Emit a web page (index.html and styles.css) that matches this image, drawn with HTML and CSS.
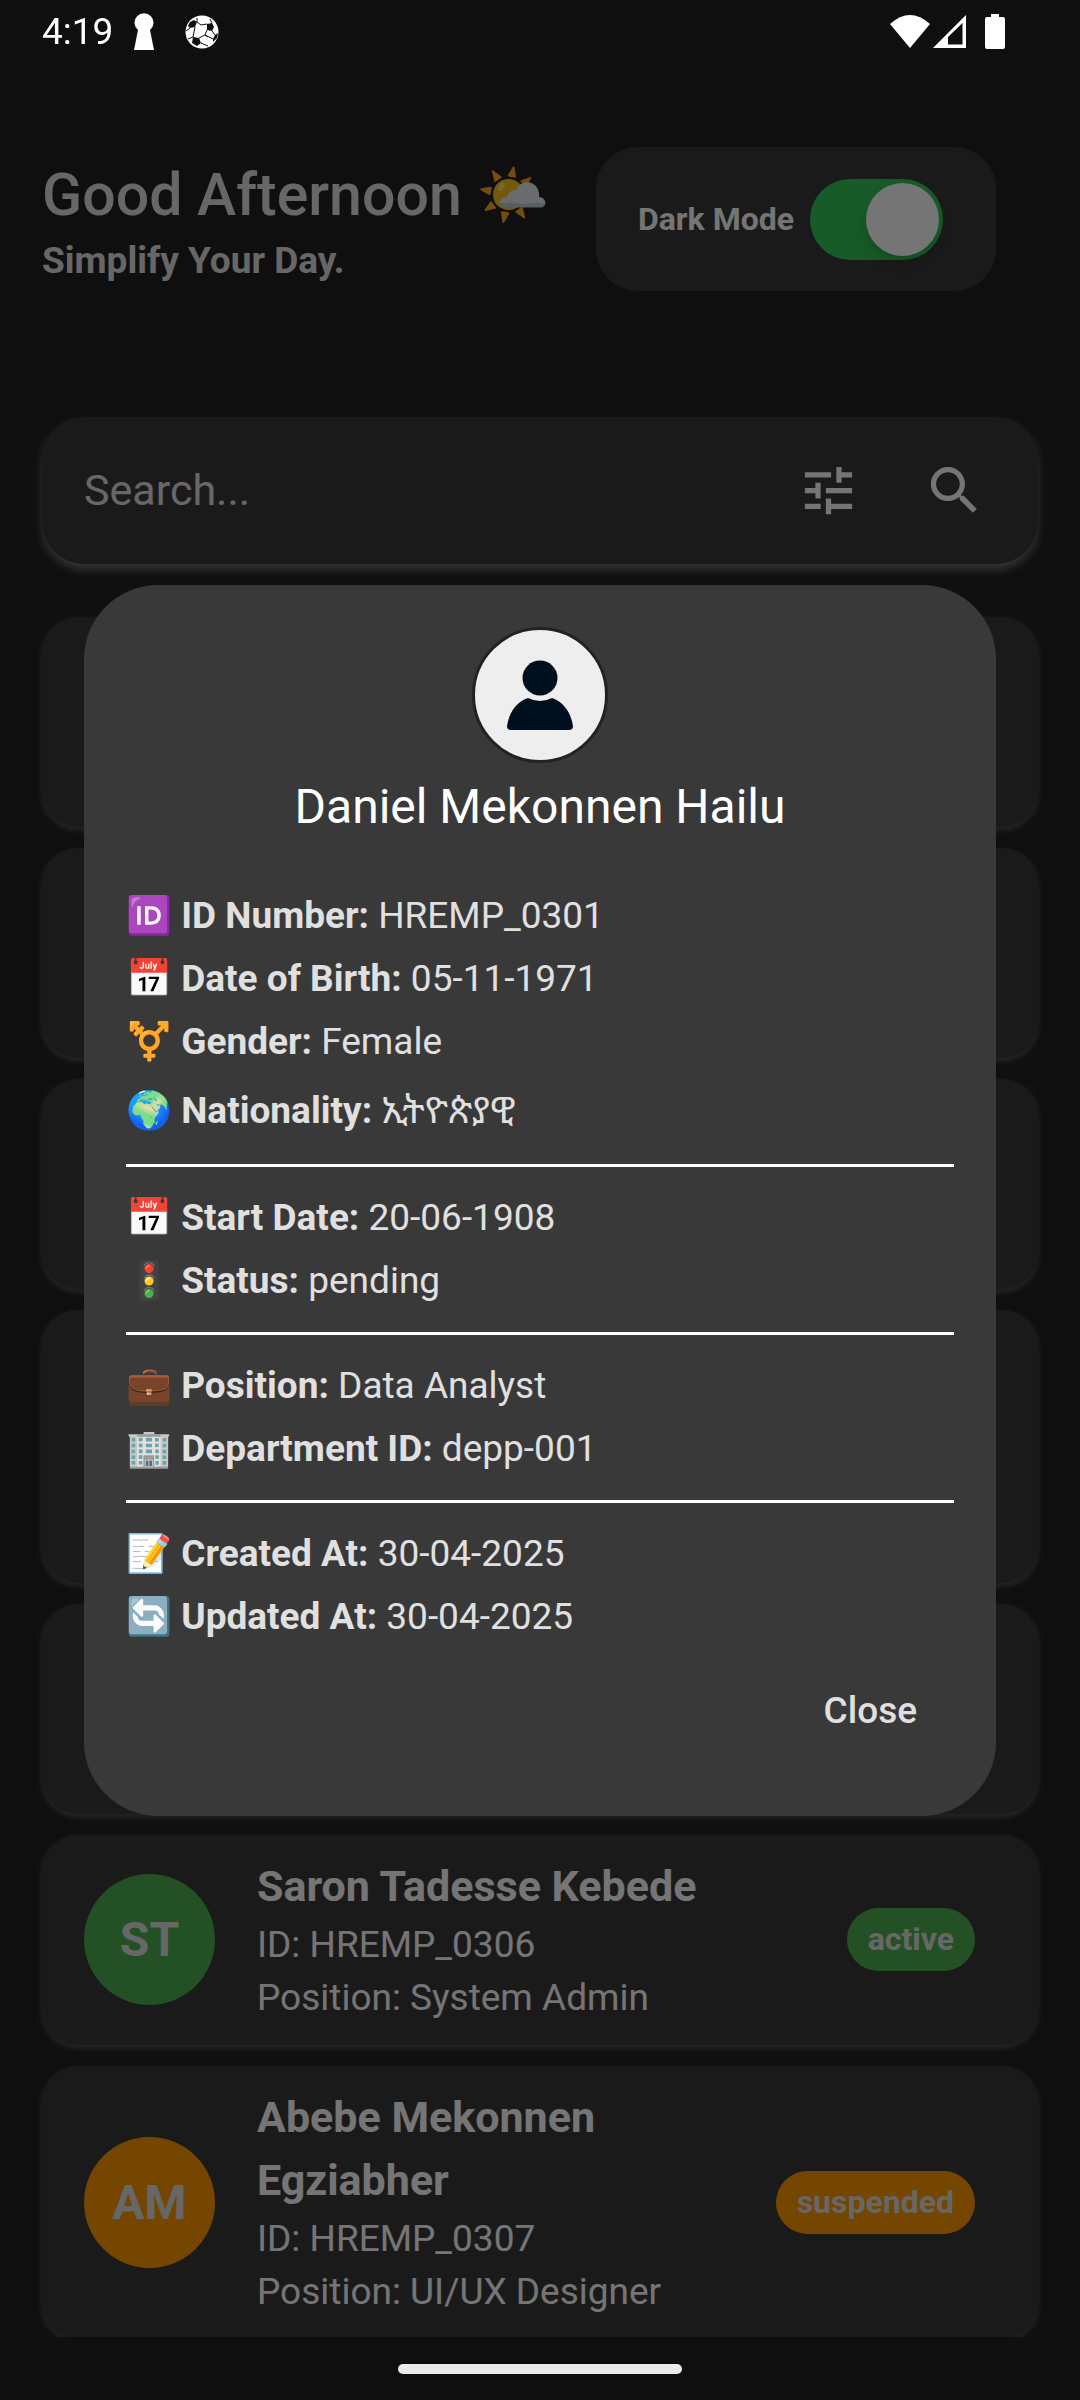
FILE: index.html
```html
<!DOCTYPE html>
<html lang="en">
<head>
<meta charset="utf-8">
<meta name="viewport" content="width=device-width, initial-scale=1">
<title>Employees</title>
<link rel="stylesheet" href="styles.css">
</head>
<body>
<div class="status-bar">
  <span class="clock">4:19</span>
  <svg class="status-key" viewBox="0 0 20 37" aria-hidden="true"><path fill="#fff" d="M0 37 4 17A9.500 9.500 0 1 1 16 17L20 37Z"/></svg>
  <svg class="status-ball" viewBox="0 0 34 34" aria-hidden="true"><circle cx="17" cy="17" r="16.500" fill="#fff"/><g fill="#0f0f0f"><path d="M5 7 9 5 12 7 10 12 5 13 3 11Z"/><path d="M22 9 27 8 29 12 27 16 22 15Z"/><path d="M8 22 14 23 16 28 12 31 7 28Z"/><path d="M30 20 33 18 32 23 28 27 28 24Z"/></g><path fill="none" stroke="#0f0f0f" stroke-width="1" d="M12 7 12 3M12 7 16 10 22 9M27 8 25 4M22 15 20 20 14 23M20 20 28 24M10 12 8 22M5 13 1 16M8 22 3 24M16 28 23 31M27 16 30 20M20 20 23 22"/></svg>
  <span class="status-icons">
    <svg class="status-wifi" viewBox="0 0 40 33" aria-hidden="true"><path fill="#fff" d="M20 33 0 9Q20-9 40 9Z"/></svg>
    <svg class="status-signal" viewBox="0 0 33 33" aria-hidden="true"><path fill="#fff" fill-rule="evenodd" d="M0 33 33 0V33ZM15 22V29.500H29.500V8Z"/></svg>
    <svg class="status-battery" viewBox="0 0 20 35" aria-hidden="true"><path fill="#fff" d="M6 0H14V3H18Q20 3 20 5V33Q20 35 18 35H2Q0 35 0 33V5Q0 3 2 3H6Z"/></svg>
  </span>
</div>

<div class="app">
  <header class="header">
    <div class="greeting">
      <h1 class="greeting-title">Good Afternoon 🌤️</h1>
      <p class="greeting-sub">Simplify Your Day.</p>
    </div>
    <label class="mode">
      <span>Dark Mode</span>
      <input class="switch" type="checkbox" role="switch" checked>
    </label>
  </header>

  <form class="search">
    <input class="search-input" type="text" placeholder="Search..." aria-label="Search">
    <button class="icon-button" type="button" aria-label="Filter"><svg viewBox="0 0 24 24"><path d="M3 17v2h6v-2H3zM3 5v2h10V5H3zm10 16v-2h8v-2h-8v-2h-2v6h2zM7 9v2H3v2h4v2h2V9H7zm14 4v-2H11v2h10zm-6-4h2V7h4V5h-4V3h-2v6z"/></svg></button>
    <button class="icon-button" type="button" aria-label="Search"><svg viewBox="0 0 24 24"><path d="M15.500 14h-.790l-.280-.270C15.410 12.590 16 11.110 16 9.500 16 5.910 13.090 3 9.500 3S3 5.910 3 9.500 5.910 16 9.500 16c1.610 0 3.090-.590 4.230-1.570l.270.280v.790l5 4.990L20.490 19l-4.990-5zm-6 0C7.010 14 5 11.990 5 9.500S7.010 5 9.500 5 14 7.010 14 9.500 11.990 14 9.500 14z"/></svg></button>
  </form>

  <main class="list">
    <article class="card"></article>
    <article class="card"></article>
    <article class="card"></article>
    <article class="card card-tall"></article>
    <article class="card"></article>
    <article class="card">
      <span class="avatar active">ST</span>
      <div class="info">
        <h2 class="name">Saron Tadesse Kebede</h2>
        <p class="meta">ID: HREMP_0306</p>
        <p class="meta">Position: System Admin</p>
      </div>
      <span class="badge active">active</span>
    </article>
    <article class="card card-tall">
      <span class="avatar suspended">AM</span>
      <div class="info">
        <h2 class="name">Abebe Mekonnen Egziabher</h2>
        <p class="meta">ID: HREMP_0307</p>
        <p class="meta">Position: UI/UX Designer</p>
      </div>
      <span class="badge suspended">suspended</span>
    </article>
  </main>
</div>

<div class="scrim">
  <section class="dialog" role="dialog" aria-modal="true" aria-labelledby="employee-name">
    <svg class="portrait" viewBox="0 0 136 136" aria-hidden="true"><circle cx="68" cy="68" r="66.500" fill="#eee" stroke="#222" stroke-width="3"/><circle cx="68" cy="51" r="17.500" fill="#000f1e"/><path fill="#000f1e" d="M56 71Q68 77 80 71C92 75 99 86 101 99Q101 103 97 103H39Q35 103 35 99C37 86 44 75 56 71Z"/></svg>
    <h2 class="dialog-name" id="employee-name">Daniel Mekonnen Hailu</h2>
    <div class="details">
      <p class="row">🆔 <b>ID Number:</b> HREMP_0301</p>
      <p class="row">📅 <b>Date of Birth:</b> 05-11-1971</p>
      <p class="row">⚧️ <b>Gender:</b> Female</p>
      <p class="row row-tall">🌍 <b>Nationality:</b> <span lang="am">ኢትዮጵያዊ</span></p>
      <hr class="rule">
      <p class="row">📅 <b>Start Date:</b> 20-06-1908</p>
      <p class="row">🚦 <b>Status:</b> pending</p>
      <hr class="rule">
      <p class="row">💼 <b>Position:</b> Data Analyst</p>
      <p class="row">🏢 <b>Department ID:</b> depp-001</p>
      <hr class="rule">
      <p class="row">📝 <b>Created At:</b> 30-04-2025</p>
      <p class="row">🔄 <b>Updated At:</b> 30-04-2025</p>
    </div>
    <button class="close" type="button">Close</button>
  </section>
</div>

<div class="nav-bar"><span class="nav-handle"></span></div>
</body>
</html>
```
FILE: styles.css
```css
* { box-sizing: border-box; }

body {
  margin: 0;
  height: 100vh;
  display: flex;
  flex-direction: column;
  overflow: hidden;
  background: #212121;
  color: #fff;
  font-family: Roboto, "Noto Sans Ethiopic", "Noto Color Emoji", sans-serif;
  font-size: 37px;
}

h1, h2, p { margin: 0; }

button, input { font: inherit; color: inherit; }

/* System bars sit above the scrim */
.status-bar {
  position: relative;
  z-index: 2;
  display: flex;
  align-items: center;
  height: 63px;
  padding: 0 75px 0 42px;
}

.clock { width: 92px; }

.status-key { width: 20px; height: 37px; }

.status-ball { width: 34px; height: 34px; margin-left: 31px; }

.status-icons {
  display: flex;
  align-items: center;
  gap: 3px;
  margin-left: auto;
}

.status-wifi { width: 40px; height: 33px; }

.status-signal { width: 33px; height: 33px; }

.status-battery { width: 20px; height: 35px; margin-left: 16px; }

.nav-bar {
  position: relative;
  z-index: 2;
  display: flex;
  justify-content: center;
  align-items: center;
  height: 63px;
}

.nav-handle {
  width: 284px;
  height: 10px;
  border-radius: 5px;
  background: #ebebeb;
}

.app {
  flex: 1;
  min-height: 0;
  display: flex;
  flex-direction: column;
  padding: 84px 0 0;
}

.header {
  display: flex;
  justify-content: space-between;
  align-items: flex-end;
  padding: 0 84px 0 42px;
}

.greeting { color: #e0e0e0; }

.greeting-title {
  font-size: 59px;
  font-weight: 500;
  line-height: 72px;
  white-space: nowrap;
}

.greeting-sub { font-weight: 700; line-height: 60px; }

.mode {
  display: flex;
  align-items: center;
  gap: 16px;
  height: 144px;
  padding: 0 53px 0 42px;
  border-radius: 42px;
  background: #3a3a3a;
  font-size: 32px;
  font-weight: 700;
  white-space: nowrap;
}

.switch {
  appearance: none;
  display: flex;
  align-items: center;
  justify-content: flex-end;
  width: 133px;
  height: 81px;
  margin: 0;
  padding: 4px;
  border-radius: 41px;
  background: #34c759;
}

.switch::before {
  content: "";
  width: 73px;
  height: 73px;
  border-radius: 50%;
  background: #fff;
  box-shadow: 0 8px 21px rgba(0, 0, 0, 0.15), 0 3px 3px rgba(0, 0, 0, 0.06);
}

.search {
  display: flex;
  align-items: center;
  flex: none;
  height: 147px;
  margin: 126px 42px 0;
  padding: 0 21px 0 42px;
  border-radius: 42px;
  background: #3a3a3a;
  box-shadow: 0 6px 10px rgba(255, 255, 255, 0.35);
}

.search-input {
  flex: 1;
  min-width: 0;
  padding: 0 0 2px;
  border: 0;
  outline: 0;
  background: none;
  font-size: 43px;
}

.search-input::placeholder { color: #e0e0e0; opacity: 1; }

.icon-button {
  display: grid;
  place-items: center;
  width: 126px;
  height: 126px;
  padding: 0;
  border: 0;
  background: none;
}

.icon-button svg { width: 63px; height: 63px; fill: #fff; }

.list {
  flex: 1;
  min-height: 0;
  display: flex;
  flex-direction: column;
  gap: 21px;
  overflow: hidden;
  margin-top: 32px;
  padding: 21px 42px 0;
}

.card {
  flex: none;
  display: flex;
  align-items: center;
  gap: 42px;
  min-height: 210px;
  padding: 20px 63px 21px 42px;
  border-radius: 36px;
  background: #3a3a3a;
  box-shadow: 0 3px 6px rgba(255, 255, 255, 0.25);
}

.card-tall { min-height: 273px; }

.avatar {
  flex: none;
  display: grid;
  place-items: center;
  width: 131px;
  height: 131px;
  border-radius: 50%;
  color: #e0e0e0;
  font-size: 48px;
  font-weight: 700;
}

.info { flex: 1; }

.name { font-size: 43px; font-weight: 700; line-height: 63px; }

.meta { line-height: 53px; }

.badge {
  flex: none;
  padding: 0 21px;
  border-radius: 32px;
  color: #e0e0e0;
  font-size: 32px;
  font-weight: 700;
  line-height: 63px;
}

.active { background: #4caf50; }

.suspended { background: #ff9800; }

.scrim {
  position: fixed;
  inset: 0;
  z-index: 1;
  display: flex;
  align-items: center;
  padding: 84px;
  background: rgba(0, 0, 0, 0.54);
}

.dialog {
  flex: 1;
  display: flex;
  flex-direction: column;
  padding: 42px;
  border-radius: 74px;
  background: #393939;
}

.portrait { align-self: center; width: 136px; height: 136px; }

.dialog-name {
  margin-top: 10px;
  font-size: 48px;
  font-weight: 400;
  line-height: 68px;
  text-align: center;
}

.details { margin-top: 43px; color: #e0e0e0; }

.row { height: 63px; line-height: 63px; white-space: nowrap; }

.row-tall { height: 71px; line-height: 76px; }

.rule {
  height: 3px;
  margin: 20px 0 19px;
  border: 0;
  background: #fff;
}

.close {
  align-self: flex-end;
  height: 126px;
  padding: 0 37px;
  border: 0;
  background: none;
  color: #e0e0e0;
  font-weight: 500;
}
```
